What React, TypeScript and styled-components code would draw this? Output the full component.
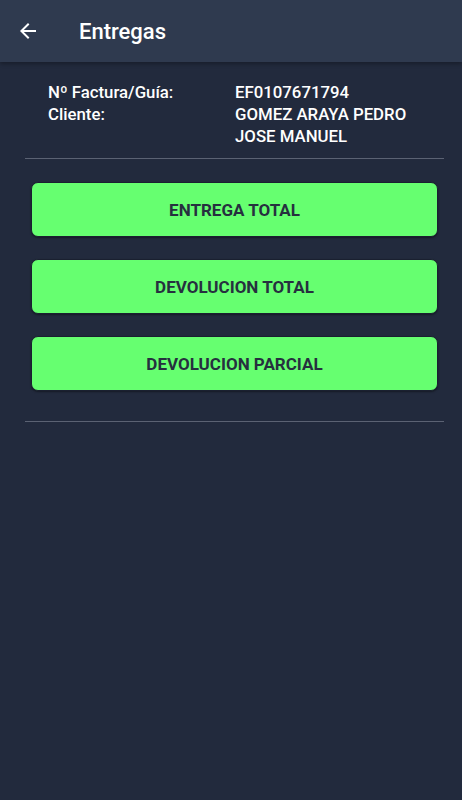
import React from "react";
import styled, { createGlobalStyle } from "styled-components";

const GlobalStyle = createGlobalStyle`
  html, body {
    margin: 0;
    padding: 0;
    background-color: #222a3d;
  }
  * {
    box-sizing: border-box;
  }
`;

const actions = ["ENTREGA TOTAL", "DEVOLUCION TOTAL", "DEVOLUCION PARCIAL"];

const BackArrow = () => (
  <svg width="24" height="24" viewBox="0 0 24 24">
    <path
      d="M20 11H7.83l5.59-5.59L12 4l-8 8 8 8 1.41-1.41L7.83 13H20v-2z"
      fill="#ffffff"
    />
  </svg>
);

const Entregas = () => {
  return (
    <Page>
      <GlobalStyle />
      <TopBar>
        <BackButton>
          <BackArrow />
        </BackButton>
        <Title>Entregas</Title>
      </TopBar>
      <Content>
        <InfoGrid>
          <Label>Nº Factura/Guía:</Label>
          <Value>EF0107671794</Value>
          <Label>Cliente:</Label>
          <Value>
            GOMEZ ARAYA PEDRO
            <br />
            JOSE MANUEL
          </Value>
        </InfoGrid>
        <Divider />
        <ButtonList>
          {actions.map((label) => (
            <ActionButton key={label}>{label}</ActionButton>
          ))}
        </ButtonList>
        <Divider />
      </Content>
    </Page>
  );
};

export default Entregas;

const Page = styled.div`
  min-height: 800px;
  background-color: #222a3d;
  font-family: Roboto, "Liberation Sans", sans-serif;
  color: #ffffff;
`;

const TopBar = styled.div`
  display: flex;
  align-items: center;
  height: 62px;
  padding-left: 16px;
  background-color: #2f3a4f;
  box-shadow: 0 2px 4px rgba(0, 0, 0, 0.3);
`;

const BackButton = styled.div`
  display: flex;
  align-items: center;
  justify-content: center;
  width: 24px;
  height: 24px;
`;

const Title = styled.h1`
  margin: 0 0 0 39px;
  font-size: 22px;
  font-weight: 500;
  color: #ffffff;
`;

const Content = styled.div`
  padding: 0 18px 0 25px;
`;

const InfoGrid = styled.div`
  display: grid;
  grid-template-columns: 187px 1fr;
  padding: 19px 0 11px 23px;
  line-height: 22px;
  font-size: 16.8px;
  font-weight: 500;
`;

const Label = styled.div`
  color: #ffffff;
`;

const Value = styled.div`
  color: #ffffff;
`;

const Divider = styled.div`
  height: 1px;
  background-color: #5b6273;
`;

const ButtonList = styled.div`
  display: flex;
  flex-direction: column;
  gap: 22px;
  padding: 23px 6px 30px 6px;
`;

const ActionButton = styled.button`
  display: flex;
  align-items: center;
  justify-content: center;
  height: 55px;
  border: 1px solid #1a2030;
  border-radius: 7px;
  background-color: #66ff70;
  color: #26303f;
  font-family: Roboto, "Liberation Sans", sans-serif;
  font-size: 17px;
  font-weight: 700;
  box-shadow: 0 1px 2px rgba(0, 0, 0, 0.4);
`;
